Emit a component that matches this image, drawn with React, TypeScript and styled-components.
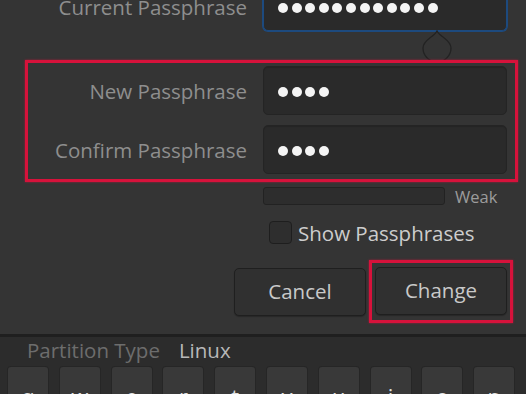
import React from "react";
import styled, { createGlobalStyle } from "styled-components";

const Global = createGlobalStyle`
  html, body { margin: 0; padding: 0; }
  body {
    background: #2c2c2c;
    font-family: "Open Sans", "DejaVu Sans", sans-serif;
    width: 526px;
    height: 394px;
    overflow: hidden;
  }
`;

const Page = styled.div`
  width: 526px;
  height: 394px;
  overflow: hidden;
  display: flex;
  flex-direction: column;
`;

const Dialog = styled.div`
  background: #343434;
  height: 334px;
  border-bottom: 3px solid #1f1f1f;
  flex-shrink: 0;
`;

const Form = styled.div`
  display: flex;
  flex-direction: column;
  margin-top: -18px;
  padding-left: 25px;
`;

const Row = styled.div<{ $label: number }>`
  display: grid;
  grid-template-columns: ${(p) => p.$label}px 244px;
  column-gap: 16px;
  align-items: center;
`;

const Label = styled.div`
  text-align: right;
  font-size: 20.5px;
  color: #8e8e8e;
  white-space: nowrap;
`;

const Field = styled.div<{ $focused?: boolean }>`
  position: relative;
  box-sizing: border-box;
  height: 49px;
  border-radius: 5px;
  background: #2a2a2a;
  border: 1px solid ${(p) => (p.$focused ? "#1d4a7e" : "#242424")};
  box-shadow: ${(p) =>
    p.$focused ? "0 0 0 1px #1d4a7e" : "inset 0 1px 1px rgba(0,0,0,0.15)"};
  display: flex;
  align-items: center;
  padding: 3px 0 0 14px;
  gap: 3.6px;
`;

const Dot = styled.span`
  width: 10px;
  height: 10px;
  border-radius: 50%;
  background: #f4f4f4;
  flex-shrink: 0;
`;

const Pointer = styled.svg`
  position: absolute;
  left: 157px;
  top: 100%;
`;

const Highlight = styled.div<{ $pad: string }>`
  border: 3px solid #d6123b;
  box-shadow: 0 0 2px rgba(214, 18, 59, 0.7);
  padding: ${(p) => p.$pad};
  position: relative;
`;

const Stack = styled.div`
  display: flex;
  flex-direction: column;
  gap: 10px;
`;

const Strength = styled.div`
  display: flex;
  align-items: center;
  gap: 10px;
  height: 18px;
`;

const Bar = styled.div`
  box-sizing: border-box;
  width: 182px;
  height: 18px;
  border-radius: 3px;
  background: #2d2d2d;
  border: 1px solid #222;
`;

const Small = styled.span`
  font-size: 16.5px;
  color: #9c9c9c;
`;

const Check = styled.label`
  display: flex;
  align-items: center;
  gap: 6px;
  height: 23px;
  padding-left: 6px;
  font-size: 20.5px;
  color: #cdcdcd;
`;

const Box = styled.span`
  box-sizing: border-box;
  width: 23px;
  height: 23px;
  border-radius: 4px;
  background: #2e2e2e;
  border: 1px solid #1e1e1e;
`;

const ButtonBar = styled.div`
  display: flex;
  justify-content: flex-end;
  align-items: center;
  gap: 3px;
  margin-right: 13px;
`;

const Button = styled.button`
  box-sizing: border-box;
  width: 132px;
  height: 48px;
  border-radius: 5px;
  background: #303030;
  border: 1px solid #1f1f1f;
  box-shadow: 0 1px 1px rgba(0, 0, 0, 0.25);
  color: #c9c9c9;
  font-family: "Open Sans", "DejaVu Sans", sans-serif;
  font-size: 20.5px;
  padding: 0 0 2px;
`;

const Spacer = styled.div<{ $h: number }>`
  height: ${(p) => p.$h}px;
  flex-shrink: 0;
`;

const Bottom = styled.div`
  flex: 1;
  background: #2c2c2c;
  display: flex;
  flex-direction: column;
`;

const Info = styled.div`
  display: flex;
  gap: 19px;
  padding: 0 0 0 27px;
  height: 20px;
  margin-top: 3px;
  align-items: center;
  font-size: 20.5px;
`;

const InfoKey = styled.span`
  color: #6d6d6d;
`;

const InfoValue = styled.span`
  color: #b8b8b8;
`;

const Keys = styled.div`
  display: flex;
  gap: 11.8px;
  padding-left: 8px;
  margin-top: 7px;
`;

const Key = styled.div`
  width: 40px;
  height: 60px;
  flex-shrink: 0;
  border-radius: 3px;
  background: #393939;
  box-shadow: 0 0 0 1px #262626;
  text-align: center;
  color: #e0e0e0;
  font-size: 22px;
  line-height: 22px;
  padding-top: 18px;
  box-sizing: border-box;
`;

const keys = ["q", "w", "e", "r", "t", "y", "u", "i", "o", "p"];

const Dots = ({ n }: { n: number }) => (
  <>
    {Array.from({ length: n }).map((_, i) => (
      <Dot key={i} />
    ))}
  </>
);

export default function App() {
  return (
    <Page>
      <Global />
      <Dialog>
        <Form>
          <Row $label={222}>
            <Label>Current Passphrase</Label>
            <Field $focused>
              <Dots n={12} />
              <Pointer width="32" height="32" viewBox="0 0 32 32">
                <path
                  d="M16 1 C 19 7, 30 10, 30 18 A 14 14 0 0 1 2 18 C 2 10, 13 7, 16 1 Z"
                  fill="none"
                  stroke="#222"
                  strokeWidth="1.3"
                />
              </Pointer>
            </Field>
          </Row>
          <Spacer $h={29} />
          <Highlight $pad="3px 4px 5px 0" style={{ width: 483 }}>
            <Stack>
              <Row $label={219}>
                <Label>New Passphrase</Label>
                <Field>
                  <Dots n={4} />
                </Field>
              </Row>
              <Row $label={219}>
                <Label>Confirm Passphrase</Label>
                <Field>
                  <Dots n={4} />
                </Field>
              </Row>
            </Stack>
          </Highlight>
          <Spacer $h={5} />
          <Row $label={222}>
            <span />
            <Strength>
              <Bar />
              <Small>Weak</Small>
            </Strength>
          </Row>
          <Spacer $h={16} />
          <Row $label={222}>
            <span />
            <Check>
              <Box />
              Show Passphrases
            </Check>
          </Row>
          <Spacer $h={16} />
          <ButtonBar>
            <Button>Cancel</Button>
            <Highlight $pad="4px 3px 5px 3px">
              <Button>Change</Button>
            </Highlight>
          </ButtonBar>
        </Form>
      </Dialog>
      <Bottom>
        <Info>
          <InfoKey>Partition Type</InfoKey>
          <InfoValue>Linux</InfoValue>
        </Info>
        <Keys>
          {keys.map((k) => (
            <Key key={k}>{k}</Key>
          ))}
        </Keys>
      </Bottom>
    </Page>
  );
}
